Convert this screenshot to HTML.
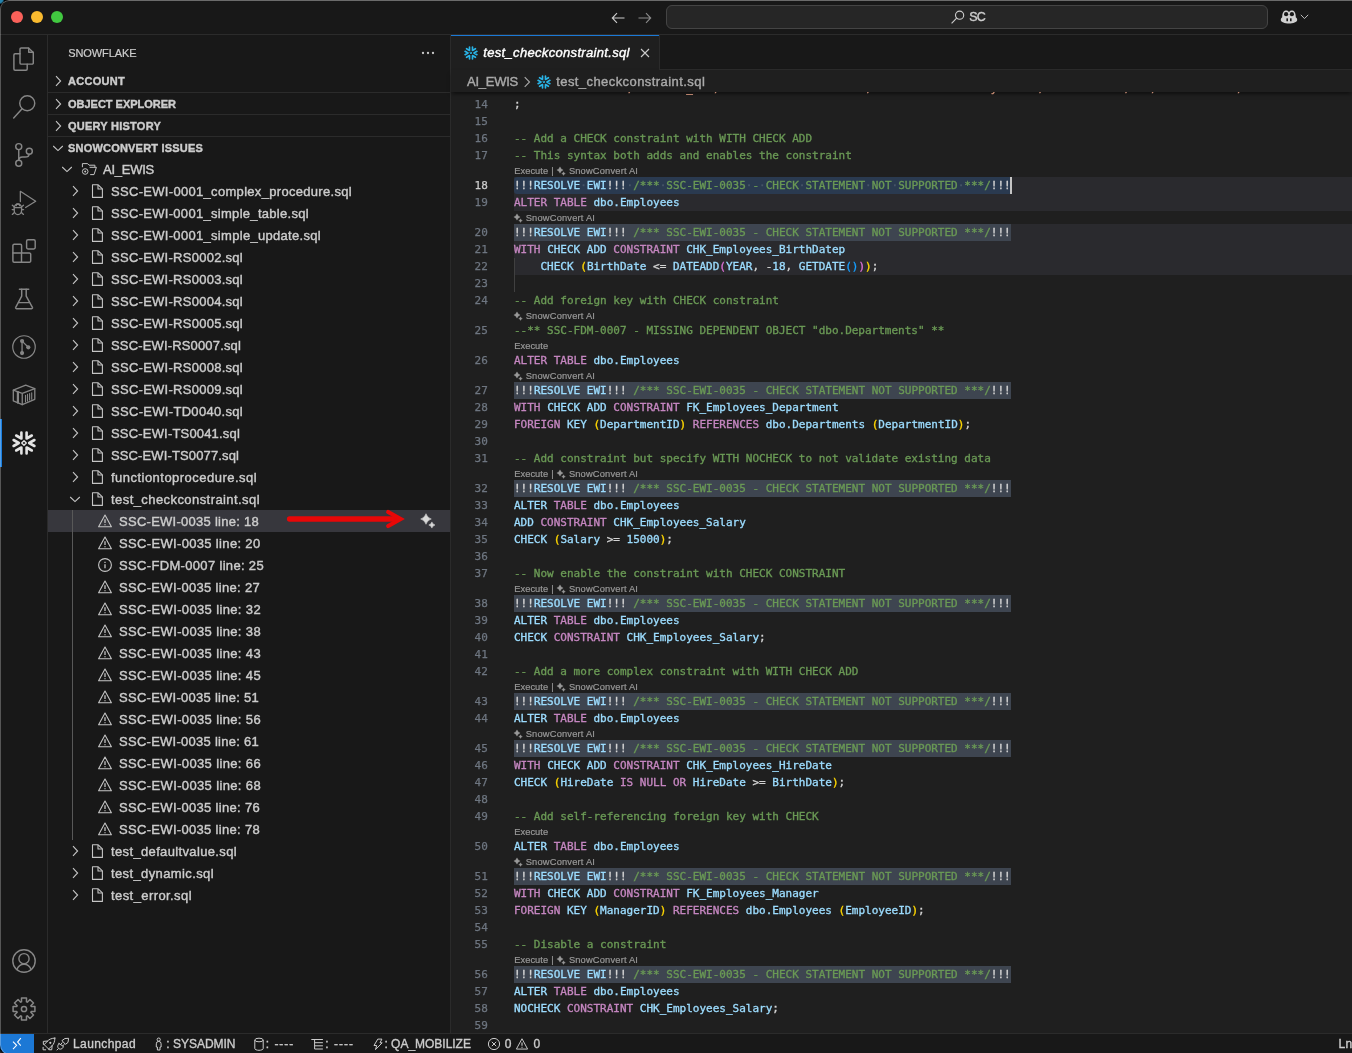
<!DOCTYPE html>
<html lang="en"><head><meta charset="utf-8"><title>test_checkconstraint.sql</title>
<style>
*{box-sizing:border-box}
html,body{margin:0;padding:0;background:#000;}
body{background:radial-gradient(circle at 0 0,#2683ad 0,#2683ad 2.5px,#000 4.5px) no-repeat 0 0/12px 12px,linear-gradient(45deg,#3a3a3a 0,#000 3px) no-repeat 0 100%/8px 8px,#000;}
body{width:1352px;height:1053px;overflow:hidden;font-family:"Liberation Sans",sans-serif;font-size:13px;color:#ccc;}
#win{will-change:transform;position:absolute;left:0;top:0;width:1400px;height:1055px;background:#181818;overflow:hidden;border-radius:9px 0 0 10px;}
#wb{position:absolute;left:0;top:0;width:1400px;height:1055px;border-radius:9px 0 0 10px;border:1px solid rgba(255,255,255,.27);border-top-color:rgba(255,255,255,.36);z-index:30;pointer-events:none}
.abs,.t,.ic{position:absolute}
.t{white-space:pre;-webkit-text-stroke:0.4px currentColor;}
svg{position:absolute;overflow:visible}
.ln{-webkit-text-stroke:0.25px currentColor;position:absolute;left:451px;width:36.800px;text-align:right;height:17px;line-height:17px;font-family:"DejaVu Sans Mono","Liberation Mono",monospace;font-size:11px;color:#6e7681;}
.cl{-webkit-text-stroke:0.33px currentColor;position:absolute;left:514px;height:17px;line-height:17px;font-family:"DejaVu Sans Mono","Liberation Mono",monospace;font-size:11px;color:#d4d4d4;white-space:pre;}
.k{color:#c586c0}.v{color:#9cdcfe}.c{color:#6a9955}.p{color:#d4d4d4}.b1{color:#ffd700}.b2{color:#da70d6}.b3{color:#179fff}.n{color:#b5cea8}.s{color:#ce9178}
.lens{position:absolute;left:514px;height:13px;line-height:13px;font-size:10px;color:#999;white-space:pre}
.hl{position:absolute;left:514px;height:17px;width:497px;background:#3e4550;}
.band{position:absolute;left:514px;right:0;background:#2a2a2e}
</style></head><body><div id="win">

<div class="abs" style="left:0;top:0;width:1352px;height:35px;border-bottom:1px solid #2b2b2b;background:#181818"></div>
<div class="abs" style="left:11px;top:11px;width:12px;height:12px;border-radius:50%;background:#f9615a"></div>
<div class="abs" style="left:31px;top:11px;width:12px;height:12px;border-radius:50%;background:#f9ba2f"></div>
<div class="abs" style="left:51px;top:11px;width:12px;height:12px;border-radius:50%;background:#41c840"></div>
<svg style="left:610.3px;top:9.5px" width="16" height="16" viewBox="0 0 16 16"><path d="M14.5 8H2.5M7 3.2L2.3 8L7 12.8" fill="none" stroke="#ccc" stroke-width="1.1"/></svg>
<svg style="left:636.7px;top:9.5px" width="16" height="16" viewBox="0 0 16 16"><path d="M1.5 8H13.5M9 3.2L13.7 8L9 12.8" fill="none" stroke="#8a8a8a" stroke-width="1.1"/></svg>
<div class="abs" style="left:666px;top:5px;width:602px;height:24px;border-radius:6px;background:#262626;border:1px solid #444"></div>
<svg style="left:950px;top:9px" width="16" height="16" viewBox="0 0 16 16"><circle cx="9.6" cy="6.2" r="4.1" fill="none" stroke="#ccc" stroke-width="1.1"/><path d="M6.6 9.2L1.6 14.4" stroke="#ccc" stroke-width="1.1"/></svg>
<div class="t" style="left:969.3px;top:6px;height:22px;line-height:22px;font-size:12.5px;color:#ccc;letter-spacing:-0.882px;">SC</div>
<svg style="left:1280px;top:9px" width="18" height="16" viewBox="0 0 18 16">
<path d="M2.2 8.2C2.2 3.5 4 1.6 6.2 1.6C7.6 1.6 8.4 2.3 9 3C9.6 2.3 10.4 1.6 11.8 1.6C14 1.6 15.8 3.5 15.8 8.2C17 9 17.2 10 17.2 11C17.2 13.2 13 14.6 9 14.6C5 14.6 0.8 13.2 0.8 11C0.8 10 1 9 2.2 8.2Z" fill="#d0d0d0"/>
<circle cx="6.1" cy="5.2" r="2.1" fill="#181818"/><circle cx="11.9" cy="5.2" r="2.1" fill="#181818"/>
<rect x="6.4" y="9.3" width="1.6" height="3" rx=".5" fill="#181818"/><rect x="10" y="9.3" width="1.6" height="3" rx=".5" fill="#181818"/>
</svg>
<svg style="left:1300px;top:13px" width="9" height="8" viewBox="0 0 9 8"><path d="M0.8 1.8L4.5 5.6L8.2 1.8" fill="none" stroke="#bbb" stroke-width="1"/></svg>
<div class="abs" style="left:0;top:35px;width:48px;height:998px;border-right:1px solid #2b2b2b"></div>
<svg style="left:12.0px;top:47.0px" width="24" height="24" viewBox="0 0 24 24" fill="none" stroke="#868686" stroke-width="1.45" stroke-linejoin="round" stroke-linecap="round"><path d="M9.2 0.9h7.3l4.8 4.6v10.400a1.200 1.200 0 0 1-1.200 1.200h-10.900a1.200 1.200 0 0 1-1.200-1.200v-13.800a1.200 1.200 0 0 1 1.200-1.200z"/><path d="M16.700 1.100v4.200h4.400"/><path d="M8 6.800h-4.900a1.200 1.200 0 0 0-1.200 1.200v14a1.200 1.200 0 0 0 1.200 1.200h10.900a1.200 1.200 0 0 0 1.200-1.200v-4.700"/></svg>
<svg style="left:12.0px;top:95.0px" width="24" height="24" viewBox="0 0 24 24" fill="none" stroke="#868686" stroke-width="1.45" stroke-linejoin="round" stroke-linecap="round"><circle cx="15.250" cy="8.200" r="7.500"/><path d="M10.100 13.800L1.700 23"/></svg>
<svg style="left:12.0px;top:143.0px" width="24" height="24" viewBox="0 0 24 24" fill="none" stroke="#868686" stroke-width="1.45" stroke-linejoin="round" stroke-linecap="round"><circle cx="6.750" cy="3.600" r="3"/><circle cx="6.750" cy="20.300" r="3"/><circle cx="17.300" cy="8.200" r="3"/><path d="M6.750 6.600v10.700"/><path d="M17.100 11.200C17.100 14 15.200 14 13 14L10.500 14C8 14 6.750 15 6.750 17.300"/></svg>
<svg style="left:12.0px;top:191.0px" width="24" height="24" viewBox="0 0 24 24" fill="none" stroke="#868686" stroke-width="1.3" stroke-linejoin="round" stroke-linecap="round"><path d="M8.350 10.600V0.300L23.700 10.250L13.600 16.500"/><path d="M2.200 17.300a3.700 4.300 0 0 1 7.400 0v2a3.700 4.300 0 0 1 -7.400 0z"/><path d="M2.200 16.700h7.400"/><path d="M4.200 14.700a1.700 1.700 0 0 1 3.400 0"/><path d="M0.300 14.200l1.900 1.600M0.200 18.600h2M0.300 23.400l2.100-1.800M11.500 14.200l-1.900 1.600M11.600 18.600h-2M11.500 23.400l-2.100-1.800"/></svg>
<svg style="left:12.0px;top:239.0px" width="24" height="24" viewBox="0 0 24 24" fill="none" stroke="#868686" stroke-width="1.45" stroke-linejoin="round" stroke-linecap="round"><path d="M2.100 5.300h6.300a1.200 1.200 0 0 1 1.200 1.200v7.550h7.900a1.200 1.200 0 0 1 1.200 1.200v6.750a1.200 1.200 0 0 1 -1.200 1.200h-15.400a1.200 1.200 0 0 1 -1.200-1.200v-15.500a1.200 1.200 0 0 1 1.200-1.200z"/><path d="M0.900 14.050h8.700M9.500 14.050v9.150"/><rect x="14.600" y="0.750" width="8.600" height="9.150" rx="1.400"/></svg>
<svg style="left:12.0px;top:287.0px" width="24" height="24" viewBox="0 0 24 24" fill="none" stroke="#868686" stroke-width="1.45" stroke-linejoin="round" stroke-linecap="round"><path d="M7.400 2.300h9.300"/><path d="M9.700 2.300v6.800l-6 11.200a.9 .9 0 0 0 .8 1.400h15.100a.9 .9 0 0 0 .8-1.400l-6.200-11.200v-6.800"/><path d="M6.600 15.600h10.900"/></svg>
<svg style="left:12.0px;top:335.0px" width="24" height="24" viewBox="0 0 24 24" fill="none" stroke="#868686" stroke-width="1.45" stroke-linejoin="round" stroke-linecap="round"><circle cx="12" cy="12" r="11.250" stroke-width="1.200"/><circle cx="10.050" cy="6.100" r="2.100" fill="#868686" stroke="none"/><circle cx="10.050" cy="18.050" r="2.100" fill="#868686" stroke="none"/><circle cx="16.300" cy="12.300" r="2.100" fill="#868686" stroke="none"/><path d="M10.050 6.100v12M10.050 6.100l6.250 6.200" stroke-width="1.300"/></svg>
<svg style="left:12.0px;top:383.0px" width="24" height="24" viewBox="0 0 24 24" fill="none" stroke="#868686" stroke-width="1.3" stroke-linejoin="round" stroke-linecap="round"><path d="M1.300 7.200L13.700 2.100L22.800 5.700V16.300L10.250 21.700L1.300 17.900Z"/><path d="M1.300 7.200L10.250 10.300L22.800 5.700M10.250 10.300V21.700"/><path d="M5.900 9.200V19.600" stroke-width="2.200"/><path d="M13.500 12.200V18.700M15.500 11.400V17.900M17.600 10.500V17M19.700 9.700V16.200" stroke-width="1.100"/></svg>
<div class="abs" style="left:0;top:419px;width:2px;height:48px;background:#1a7fe0"></div>
<svg style="left:24px;top:443px;" width="1" height="1" viewBox="0 0 1 1"><g transform="scale(1.0)" fill="none" stroke="#e4e4e4" stroke-width="2.6" stroke-linecap="round" stroke-linejoin="round"><path d="M10.40 -3.00L5.20 -0.00L10.40 3.00"/><path d="M2.60 -10.50L2.60 -4.50L7.80 -7.50"/><path d="M-7.80 -7.50L-2.60 -4.50L-2.60 -10.50"/><path d="M-10.40 3.00L-5.20 -0.00L-10.40 -3.00"/><path d="M-2.60 10.50L-2.60 4.50L-7.80 7.50"/><path d="M7.80 7.50L2.60 4.50L2.60 10.50"/><path d="M0 -2.3L2.3 0L0 2.3L-2.3 0Z" stroke-width="1.3"/></g></svg>
<svg style="left:12.0px;top:949.0px" width="24" height="24" viewBox="0 0 24 24" fill="none" stroke="#868686" stroke-width="1.4" stroke-linejoin="round" stroke-linecap="round"><circle cx="12" cy="12" r="11.200"/><circle cx="12" cy="9.700" r="5.100"/><path d="M4.900 20.500c1.300-3.500 4-5.300 7.100-5.300s5.800 1.800 7.100 5.300"/></svg>
<svg style="left:12.0px;top:997.0px" width="24" height="24" viewBox="0 0 24 24" fill="none" stroke="#868686" stroke-width="1.5" stroke-linejoin="round" stroke-linecap="round"><path d="M22.91 9.48L22.91 14.52L19.19 14.47L18.83 15.33L21.50 17.94L17.94 21.50L15.33 18.83L14.47 19.19L14.52 22.91L9.48 22.91L9.53 19.19L8.67 18.83L6.06 21.50L2.50 17.94L5.17 15.33L4.81 14.47L1.09 14.52L1.09 9.48L4.81 9.53L5.17 8.67L2.50 6.06L6.06 2.50L8.67 5.17L9.53 4.81L9.48 1.09L14.52 1.09L14.47 4.81L15.33 5.17L17.94 2.50L21.50 6.06L18.83 8.67L19.19 9.53Z"/><circle cx="12" cy="12" r="2.600"/></svg>
<div class="abs" style="left:48px;top:35px;width:403px;height:998px;border-right:1px solid #2b2b2b"></div>
<div class="t" style="left:68.2px;top:42px;height:22px;line-height:22px;font-size:11px;color:#ccc;letter-spacing:-0.096px;-webkit-text-stroke:0.2px currentColor;">SNOWFLAKE</div>
<svg style="left:415px;top:45px" width="26" height="16" viewBox="0 0 26 16" fill="#c8c8c8"><circle cx="8" cy="8" r="1.15"/><circle cx="13" cy="8" r="1.15"/><circle cx="18" cy="8" r="1.15"/></svg>
<svg style="left:50.3px;top:73.3px" width="16" height="16" viewBox="0 0 16 16"><path d="M6 3.200L10.600 8L6 12.800" fill="none" stroke="#c5c5c5" stroke-width="1.100"/></svg>
<div class="t" style="left:68px;top:70px;height:22px;line-height:22px;font-size:11px;color:#ccc;font-weight:bold;letter-spacing:0.286px;">ACCOUNT</div>
<div class="abs" style="left:48px;top:92px;width:402px;height:1px;background:#2b2b2b"></div>
<svg style="left:50.3px;top:96.0px" width="16" height="16" viewBox="0 0 16 16"><path d="M6 3.200L10.600 8L6 12.800" fill="none" stroke="#c5c5c5" stroke-width="1.100"/></svg>
<div class="t" style="left:68px;top:93px;height:22px;line-height:22px;font-size:11px;color:#ccc;font-weight:bold;letter-spacing:-0.012px;">OBJECT EXPLORER</div>
<div class="abs" style="left:48px;top:114px;width:402px;height:1px;background:#2b2b2b"></div>
<svg style="left:50.3px;top:118.0px" width="16" height="16" viewBox="0 0 16 16"><path d="M6 3.200L10.600 8L6 12.800" fill="none" stroke="#c5c5c5" stroke-width="1.100"/></svg>
<div class="t" style="left:68px;top:115px;height:22px;line-height:22px;font-size:11px;color:#ccc;font-weight:bold;letter-spacing:0.242px;">QUERY HISTORY</div>
<div class="abs" style="left:48px;top:136px;width:402px;height:1px;background:#2b2b2b"></div>
<svg style="left:50.3px;top:140.0px" width="16" height="16" viewBox="0 0 16 16"><path d="M3.200 6L8 10.600L12.800 6" fill="none" stroke="#c5c5c5" stroke-width="1.100"/></svg>
<div class="t" style="left:68px;top:137px;height:22px;line-height:22px;font-size:11px;color:#ccc;font-weight:bold;letter-spacing:0.200px;">SNOWCONVERT ISSUES</div>
<svg style="left:59px;top:161px" width="16" height="16" viewBox="0 0 16 16"><path d="M3.200 6L8 10.600L12.800 6" fill="none" stroke="#c5c5c5" stroke-width="1.100"/></svg>
<svg style="left:80px;top:161px" width="18" height="16" viewBox="0 0 18 16" fill="none" stroke="#c5c5c5" stroke-width="1" stroke-linejoin="round"><path d="M2.400 6.200V2.600H7.600L9 4.200H14.900V6.200"/><path d="M9.600 6.300H16.400L14 13.600H10.200"/><circle cx="5.200" cy="10.500" r="2.800"/><path d="M5.200 9.300L6.400 10.500L5.200 11.700L4 10.500Z" fill="#c5c5c5" stroke="none"/></svg>
<div class="t" style="left:103px;top:159px;height:22px;line-height:22px;font-size:13px;color:#ccc;letter-spacing:-0.248px;">AI_EWIS</div>
<svg style="left:67.4px;top:183px" width="16" height="16" viewBox="0 0 16 16"><path d="M6 3.200L10.600 8L6 12.800" fill="none" stroke="#c5c5c5" stroke-width="1.100"/></svg>
<svg style="left:89px;top:183px" width="16" height="16" viewBox="0 0 16 16" fill="none" stroke="#c5c5c5" stroke-width="1.100" stroke-linejoin="round"><path d="M3.500 1.800h5.700l4.200 4.100v8.500h-9.900z"/><path d="M9 2v4h4.200"/></svg>
<div class="t" style="left:111px;top:181px;height:22px;line-height:22px;font-size:13px;color:#ccc;letter-spacing:0.309px;">SSC-EWI-0001_complex_procedure.sql</div>
<svg style="left:67.4px;top:205px" width="16" height="16" viewBox="0 0 16 16"><path d="M6 3.200L10.600 8L6 12.800" fill="none" stroke="#c5c5c5" stroke-width="1.100"/></svg>
<svg style="left:89px;top:205px" width="16" height="16" viewBox="0 0 16 16" fill="none" stroke="#c5c5c5" stroke-width="1.100" stroke-linejoin="round"><path d="M3.500 1.800h5.700l4.200 4.100v8.500h-9.900z"/><path d="M9 2v4h4.200"/></svg>
<div class="t" style="left:111px;top:203px;height:22px;line-height:22px;font-size:13px;color:#ccc;letter-spacing:0.300px;">SSC-EWI-0001_simple_table.sql</div>
<svg style="left:67.4px;top:227px" width="16" height="16" viewBox="0 0 16 16"><path d="M6 3.200L10.600 8L6 12.800" fill="none" stroke="#c5c5c5" stroke-width="1.100"/></svg>
<svg style="left:89px;top:227px" width="16" height="16" viewBox="0 0 16 16" fill="none" stroke="#c5c5c5" stroke-width="1.100" stroke-linejoin="round"><path d="M3.500 1.800h5.700l4.200 4.100v8.500h-9.900z"/><path d="M9 2v4h4.200"/></svg>
<div class="t" style="left:111px;top:225px;height:22px;line-height:22px;font-size:13px;color:#ccc;letter-spacing:0.304px;">SSC-EWI-0001_simple_update.sql</div>
<svg style="left:67.4px;top:249px" width="16" height="16" viewBox="0 0 16 16"><path d="M6 3.200L10.600 8L6 12.800" fill="none" stroke="#c5c5c5" stroke-width="1.100"/></svg>
<svg style="left:89px;top:249px" width="16" height="16" viewBox="0 0 16 16" fill="none" stroke="#c5c5c5" stroke-width="1.100" stroke-linejoin="round"><path d="M3.500 1.800h5.700l4.200 4.100v8.500h-9.900z"/><path d="M9 2v4h4.200"/></svg>
<div class="t" style="left:111px;top:247px;height:22px;line-height:22px;font-size:13px;color:#ccc;letter-spacing:0.269px;">SSC-EWI-RS0002.sql</div>
<svg style="left:67.4px;top:271px" width="16" height="16" viewBox="0 0 16 16"><path d="M6 3.200L10.600 8L6 12.800" fill="none" stroke="#c5c5c5" stroke-width="1.100"/></svg>
<svg style="left:89px;top:271px" width="16" height="16" viewBox="0 0 16 16" fill="none" stroke="#c5c5c5" stroke-width="1.100" stroke-linejoin="round"><path d="M3.500 1.800h5.700l4.200 4.100v8.500h-9.900z"/><path d="M9 2v4h4.200"/></svg>
<div class="t" style="left:111px;top:269px;height:22px;line-height:22px;font-size:13px;color:#ccc;letter-spacing:0.269px;">SSC-EWI-RS0003.sql</div>
<svg style="left:67.4px;top:293px" width="16" height="16" viewBox="0 0 16 16"><path d="M6 3.200L10.600 8L6 12.800" fill="none" stroke="#c5c5c5" stroke-width="1.100"/></svg>
<svg style="left:89px;top:293px" width="16" height="16" viewBox="0 0 16 16" fill="none" stroke="#c5c5c5" stroke-width="1.100" stroke-linejoin="round"><path d="M3.500 1.800h5.700l4.200 4.100v8.500h-9.900z"/><path d="M9 2v4h4.200"/></svg>
<div class="t" style="left:111px;top:291px;height:22px;line-height:22px;font-size:13px;color:#ccc;letter-spacing:0.269px;">SSC-EWI-RS0004.sql</div>
<svg style="left:67.4px;top:315px" width="16" height="16" viewBox="0 0 16 16"><path d="M6 3.200L10.600 8L6 12.800" fill="none" stroke="#c5c5c5" stroke-width="1.100"/></svg>
<svg style="left:89px;top:315px" width="16" height="16" viewBox="0 0 16 16" fill="none" stroke="#c5c5c5" stroke-width="1.100" stroke-linejoin="round"><path d="M3.500 1.800h5.700l4.200 4.100v8.500h-9.900z"/><path d="M9 2v4h4.200"/></svg>
<div class="t" style="left:111px;top:313px;height:22px;line-height:22px;font-size:13px;color:#ccc;letter-spacing:0.269px;">SSC-EWI-RS0005.sql</div>
<svg style="left:67.4px;top:337px" width="16" height="16" viewBox="0 0 16 16"><path d="M6 3.200L10.600 8L6 12.800" fill="none" stroke="#c5c5c5" stroke-width="1.100"/></svg>
<svg style="left:89px;top:337px" width="16" height="16" viewBox="0 0 16 16" fill="none" stroke="#c5c5c5" stroke-width="1.100" stroke-linejoin="round"><path d="M3.500 1.800h5.700l4.200 4.100v8.500h-9.900z"/><path d="M9 2v4h4.200"/></svg>
<div class="t" style="left:111px;top:335px;height:22px;line-height:22px;font-size:13px;color:#ccc;letter-spacing:0.158px;">SSC-EWI-RS0007.sql</div>
<svg style="left:67.4px;top:359px" width="16" height="16" viewBox="0 0 16 16"><path d="M6 3.200L10.600 8L6 12.800" fill="none" stroke="#c5c5c5" stroke-width="1.100"/></svg>
<svg style="left:89px;top:359px" width="16" height="16" viewBox="0 0 16 16" fill="none" stroke="#c5c5c5" stroke-width="1.100" stroke-linejoin="round"><path d="M3.500 1.800h5.700l4.200 4.100v8.500h-9.900z"/><path d="M9 2v4h4.200"/></svg>
<div class="t" style="left:111px;top:357px;height:22px;line-height:22px;font-size:13px;color:#ccc;letter-spacing:0.269px;">SSC-EWI-RS0008.sql</div>
<svg style="left:67.4px;top:381px" width="16" height="16" viewBox="0 0 16 16"><path d="M6 3.200L10.600 8L6 12.800" fill="none" stroke="#c5c5c5" stroke-width="1.100"/></svg>
<svg style="left:89px;top:381px" width="16" height="16" viewBox="0 0 16 16" fill="none" stroke="#c5c5c5" stroke-width="1.100" stroke-linejoin="round"><path d="M3.500 1.800h5.700l4.200 4.100v8.500h-9.900z"/><path d="M9 2v4h4.200"/></svg>
<div class="t" style="left:111px;top:379px;height:22px;line-height:22px;font-size:13px;color:#ccc;letter-spacing:0.269px;">SSC-EWI-RS0009.sql</div>
<svg style="left:67.4px;top:403px" width="16" height="16" viewBox="0 0 16 16"><path d="M6 3.200L10.600 8L6 12.800" fill="none" stroke="#c5c5c5" stroke-width="1.100"/></svg>
<svg style="left:89px;top:403px" width="16" height="16" viewBox="0 0 16 16" fill="none" stroke="#c5c5c5" stroke-width="1.100" stroke-linejoin="round"><path d="M3.500 1.800h5.700l4.200 4.100v8.500h-9.900z"/><path d="M9 2v4h4.200"/></svg>
<div class="t" style="left:111px;top:401px;height:22px;line-height:22px;font-size:13px;color:#ccc;letter-spacing:0.310px;">SSC-EWI-TD0040.sql</div>
<svg style="left:67.4px;top:425px" width="16" height="16" viewBox="0 0 16 16"><path d="M6 3.200L10.600 8L6 12.800" fill="none" stroke="#c5c5c5" stroke-width="1.100"/></svg>
<svg style="left:89px;top:425px" width="16" height="16" viewBox="0 0 16 16" fill="none" stroke="#c5c5c5" stroke-width="1.100" stroke-linejoin="round"><path d="M3.500 1.800h5.700l4.200 4.100v8.500h-9.900z"/><path d="M9 2v4h4.200"/></svg>
<div class="t" style="left:111px;top:423px;height:22px;line-height:22px;font-size:13px;color:#ccc;letter-spacing:0.183px;">SSC-EWI-TS0041.sql</div>
<svg style="left:67.4px;top:447px" width="16" height="16" viewBox="0 0 16 16"><path d="M6 3.200L10.600 8L6 12.800" fill="none" stroke="#c5c5c5" stroke-width="1.100"/></svg>
<svg style="left:89px;top:447px" width="16" height="16" viewBox="0 0 16 16" fill="none" stroke="#c5c5c5" stroke-width="1.100" stroke-linejoin="round"><path d="M3.500 1.800h5.700l4.200 4.100v8.500h-9.900z"/><path d="M9 2v4h4.200"/></svg>
<div class="t" style="left:111px;top:445px;height:22px;line-height:22px;font-size:13px;color:#ccc;letter-spacing:0.128px;">SSC-EWI-TS0077.sql</div>
<svg style="left:67.4px;top:469px" width="16" height="16" viewBox="0 0 16 16"><path d="M6 3.200L10.600 8L6 12.800" fill="none" stroke="#c5c5c5" stroke-width="1.100"/></svg>
<svg style="left:89px;top:469px" width="16" height="16" viewBox="0 0 16 16" fill="none" stroke="#c5c5c5" stroke-width="1.100" stroke-linejoin="round"><path d="M3.500 1.800h5.700l4.200 4.100v8.500h-9.900z"/><path d="M9 2v4h4.200"/></svg>
<div class="t" style="left:111px;top:467px;height:22px;line-height:22px;font-size:13px;color:#ccc;letter-spacing:0.472px;">functiontoprocedure.sql</div>
<svg style="left:67.4px;top:491px" width="16" height="16" viewBox="0 0 16 16"><path d="M3.200 6L8 10.600L12.800 6" fill="none" stroke="#c5c5c5" stroke-width="1.100"/></svg>
<svg style="left:89px;top:491px" width="16" height="16" viewBox="0 0 16 16" fill="none" stroke="#c5c5c5" stroke-width="1.100" stroke-linejoin="round"><path d="M3.500 1.800h5.700l4.200 4.100v8.500h-9.900z"/><path d="M9 2v4h4.200"/></svg>
<div class="t" style="left:111px;top:489px;height:22px;line-height:22px;font-size:13px;color:#ccc;letter-spacing:0.428px;">test_checkconstraint.sql</div>
<div class="abs" style="left:48px;top:510px;width:402px;height:22px;background:#37373d"></div>
<div class="abs" style="left:72px;top:510px;width:1px;height:330px;background:#585858"></div>
<svg style="left:97.0px;top:512.8px" width="16" height="16" viewBox="0 0 16 16" fill="none" stroke="#c5c5c5" stroke-width="1.100" stroke-linejoin="round"><path d="M8 2L14.400 13.800H1.600z"/><path d="M8 6.200v3.800" stroke-width="1.300"/><path d="M8 11.200v1.100" stroke-width="1.300"/></svg>
<div class="t" style="left:119px;top:511px;height:22px;line-height:22px;font-size:13px;color:#ccc;letter-spacing:0.267px;">SSC-EWI-0035 line: 18</div>
<svg style="left:97.0px;top:534.8px" width="16" height="16" viewBox="0 0 16 16" fill="none" stroke="#c5c5c5" stroke-width="1.100" stroke-linejoin="round"><path d="M8 2L14.400 13.800H1.600z"/><path d="M8 6.200v3.800" stroke-width="1.300"/><path d="M8 11.200v1.100" stroke-width="1.300"/></svg>
<div class="t" style="left:119px;top:533px;height:22px;line-height:22px;font-size:13px;color:#ccc;letter-spacing:0.338px;">SSC-EWI-0035 line: 20</div>
<svg style="left:97px;top:557px" width="16" height="16" viewBox="0 0 16 16" fill="none" stroke="#c5c5c5" stroke-width="1.100"><circle cx="8" cy="8" r="6.400"/><path d="M8 7.200v4" stroke-width="1.300"/><path d="M8 4.800v1.100" stroke-width="1.300"/></svg>
<div class="t" style="left:119px;top:555px;height:22px;line-height:22px;font-size:13px;color:#ccc;letter-spacing:0.333px;">SSC-FDM-0007 line: 25</div>
<svg style="left:97.0px;top:578.8px" width="16" height="16" viewBox="0 0 16 16" fill="none" stroke="#c5c5c5" stroke-width="1.100" stroke-linejoin="round"><path d="M8 2L14.400 13.800H1.600z"/><path d="M8 6.200v3.800" stroke-width="1.300"/><path d="M8 11.200v1.100" stroke-width="1.300"/></svg>
<div class="t" style="left:119px;top:577px;height:22px;line-height:22px;font-size:13px;color:#ccc;letter-spacing:0.315px;">SSC-EWI-0035 line: 27</div>
<svg style="left:97.0px;top:600.8px" width="16" height="16" viewBox="0 0 16 16" fill="none" stroke="#c5c5c5" stroke-width="1.100" stroke-linejoin="round"><path d="M8 2L14.400 13.800H1.600z"/><path d="M8 6.200v3.800" stroke-width="1.300"/><path d="M8 11.200v1.100" stroke-width="1.300"/></svg>
<div class="t" style="left:119px;top:599px;height:22px;line-height:22px;font-size:13px;color:#ccc;letter-spacing:0.362px;">SSC-EWI-0035 line: 32</div>
<svg style="left:97.0px;top:622.8px" width="16" height="16" viewBox="0 0 16 16" fill="none" stroke="#c5c5c5" stroke-width="1.100" stroke-linejoin="round"><path d="M8 2L14.400 13.800H1.600z"/><path d="M8 6.200v3.800" stroke-width="1.300"/><path d="M8 11.200v1.100" stroke-width="1.300"/></svg>
<div class="t" style="left:119px;top:621px;height:22px;line-height:22px;font-size:13px;color:#ccc;letter-spacing:0.362px;">SSC-EWI-0035 line: 38</div>
<svg style="left:97.0px;top:644.8px" width="16" height="16" viewBox="0 0 16 16" fill="none" stroke="#c5c5c5" stroke-width="1.100" stroke-linejoin="round"><path d="M8 2L14.400 13.800H1.600z"/><path d="M8 6.200v3.800" stroke-width="1.300"/><path d="M8 11.200v1.100" stroke-width="1.300"/></svg>
<div class="t" style="left:119px;top:643px;height:22px;line-height:22px;font-size:13px;color:#ccc;letter-spacing:0.362px;">SSC-EWI-0035 line: 43</div>
<svg style="left:97.0px;top:666.8px" width="16" height="16" viewBox="0 0 16 16" fill="none" stroke="#c5c5c5" stroke-width="1.100" stroke-linejoin="round"><path d="M8 2L14.400 13.800H1.600z"/><path d="M8 6.200v3.800" stroke-width="1.300"/><path d="M8 11.200v1.100" stroke-width="1.300"/></svg>
<div class="t" style="left:119px;top:665px;height:22px;line-height:22px;font-size:13px;color:#ccc;letter-spacing:0.362px;">SSC-EWI-0035 line: 45</div>
<svg style="left:97.0px;top:688.8px" width="16" height="16" viewBox="0 0 16 16" fill="none" stroke="#c5c5c5" stroke-width="1.100" stroke-linejoin="round"><path d="M8 2L14.400 13.800H1.600z"/><path d="M8 6.200v3.800" stroke-width="1.300"/><path d="M8 11.200v1.100" stroke-width="1.300"/></svg>
<div class="t" style="left:119px;top:687px;height:22px;line-height:22px;font-size:13px;color:#ccc;letter-spacing:0.267px;">SSC-EWI-0035 line: 51</div>
<svg style="left:97.0px;top:710.8px" width="16" height="16" viewBox="0 0 16 16" fill="none" stroke="#c5c5c5" stroke-width="1.100" stroke-linejoin="round"><path d="M8 2L14.400 13.800H1.600z"/><path d="M8 6.200v3.800" stroke-width="1.300"/><path d="M8 11.200v1.100" stroke-width="1.300"/></svg>
<div class="t" style="left:119px;top:709px;height:22px;line-height:22px;font-size:13px;color:#ccc;letter-spacing:0.362px;">SSC-EWI-0035 line: 56</div>
<svg style="left:97.0px;top:732.8px" width="16" height="16" viewBox="0 0 16 16" fill="none" stroke="#c5c5c5" stroke-width="1.100" stroke-linejoin="round"><path d="M8 2L14.400 13.800H1.600z"/><path d="M8 6.200v3.800" stroke-width="1.300"/><path d="M8 11.200v1.100" stroke-width="1.300"/></svg>
<div class="t" style="left:119px;top:731px;height:22px;line-height:22px;font-size:13px;color:#ccc;letter-spacing:0.267px;">SSC-EWI-0035 line: 61</div>
<svg style="left:97.0px;top:754.8px" width="16" height="16" viewBox="0 0 16 16" fill="none" stroke="#c5c5c5" stroke-width="1.100" stroke-linejoin="round"><path d="M8 2L14.400 13.800H1.600z"/><path d="M8 6.200v3.800" stroke-width="1.300"/><path d="M8 11.200v1.100" stroke-width="1.300"/></svg>
<div class="t" style="left:119px;top:753px;height:22px;line-height:22px;font-size:13px;color:#ccc;letter-spacing:0.362px;">SSC-EWI-0035 line: 66</div>
<svg style="left:97.0px;top:776.8px" width="16" height="16" viewBox="0 0 16 16" fill="none" stroke="#c5c5c5" stroke-width="1.100" stroke-linejoin="round"><path d="M8 2L14.400 13.800H1.600z"/><path d="M8 6.200v3.800" stroke-width="1.300"/><path d="M8 11.200v1.100" stroke-width="1.300"/></svg>
<div class="t" style="left:119px;top:775px;height:22px;line-height:22px;font-size:13px;color:#ccc;letter-spacing:0.362px;">SSC-EWI-0035 line: 68</div>
<svg style="left:97.0px;top:798.8px" width="16" height="16" viewBox="0 0 16 16" fill="none" stroke="#c5c5c5" stroke-width="1.100" stroke-linejoin="round"><path d="M8 2L14.400 13.800H1.600z"/><path d="M8 6.200v3.800" stroke-width="1.300"/><path d="M8 11.200v1.100" stroke-width="1.300"/></svg>
<div class="t" style="left:119px;top:797px;height:22px;line-height:22px;font-size:13px;color:#ccc;letter-spacing:0.315px;">SSC-EWI-0035 line: 76</div>
<svg style="left:97.0px;top:820.8px" width="16" height="16" viewBox="0 0 16 16" fill="none" stroke="#c5c5c5" stroke-width="1.100" stroke-linejoin="round"><path d="M8 2L14.400 13.800H1.600z"/><path d="M8 6.200v3.800" stroke-width="1.300"/><path d="M8 11.200v1.100" stroke-width="1.300"/></svg>
<div class="t" style="left:119px;top:819px;height:22px;line-height:22px;font-size:13px;color:#ccc;letter-spacing:0.315px;">SSC-EWI-0035 line: 78</div>
<svg style="left:286px;top:510px" width="122" height="22" viewBox="0 0 122 22"><path d="M3.600 9H112" stroke="#e80707" stroke-width="5.400" stroke-linecap="round"/><path d="M102.200 2L114.600 9L102.200 16" fill="none" stroke="#e80707" stroke-width="4.200" stroke-linecap="round" stroke-linejoin="miter"/></svg>
<svg style="left:426px;top:519px" width="1" height="1" viewBox="0 0 1 1"><path d="M0.00 -5.30Q1.25 -1.25 5.30 0.00Q1.25 1.25 0.00 5.30Q-1.25 1.25 -5.30 0.00Q-1.25 -1.25 0.00 -5.30ZM5.90 2.90Q6.60 5.30 9.00 6.00Q6.60 6.70 5.90 9.10Q5.20 6.70 2.80 6.00Q5.20 5.30 5.90 2.90Z" fill="#d8d8d8" stroke="#d8d8d8" stroke-width="0.50" stroke-linejoin="round"/></svg>
<svg style="left:67.4px;top:843px" width="16" height="16" viewBox="0 0 16 16"><path d="M6 3.200L10.600 8L6 12.800" fill="none" stroke="#c5c5c5" stroke-width="1.100"/></svg>
<svg style="left:89px;top:843px" width="16" height="16" viewBox="0 0 16 16" fill="none" stroke="#c5c5c5" stroke-width="1.100" stroke-linejoin="round"><path d="M3.500 1.800h5.700l4.200 4.100v8.500h-9.900z"/><path d="M9 2v4h4.200"/></svg>
<div class="t" style="left:111px;top:841px;height:22px;line-height:22px;font-size:13px;color:#ccc;letter-spacing:0.356px;">test_defaultvalue.sql</div>
<svg style="left:67.4px;top:865px" width="16" height="16" viewBox="0 0 16 16"><path d="M6 3.200L10.600 8L6 12.800" fill="none" stroke="#c5c5c5" stroke-width="1.100"/></svg>
<svg style="left:89px;top:865px" width="16" height="16" viewBox="0 0 16 16" fill="none" stroke="#c5c5c5" stroke-width="1.100" stroke-linejoin="round"><path d="M3.500 1.800h5.700l4.200 4.100v8.500h-9.900z"/><path d="M9 2v4h4.200"/></svg>
<div class="t" style="left:111px;top:863px;height:22px;line-height:22px;font-size:13px;color:#ccc;letter-spacing:0.386px;">test_dynamic.sql</div>
<svg style="left:67.4px;top:887px" width="16" height="16" viewBox="0 0 16 16"><path d="M6 3.200L10.600 8L6 12.800" fill="none" stroke="#c5c5c5" stroke-width="1.100"/></svg>
<svg style="left:89px;top:887px" width="16" height="16" viewBox="0 0 16 16" fill="none" stroke="#c5c5c5" stroke-width="1.100" stroke-linejoin="round"><path d="M3.500 1.800h5.700l4.200 4.100v8.500h-9.900z"/><path d="M9 2v4h4.200"/></svg>
<div class="t" style="left:111px;top:885px;height:22px;line-height:22px;font-size:13px;color:#ccc;letter-spacing:0.418px;">test_error.sql</div>
<div class="abs" style="left:451px;top:35px;width:901px;height:35px;background:#181818;border-bottom:1px solid #2b2b2b"></div>
<div class="abs" style="left:451px;top:35px;width:209px;height:35px;background:#1f1f1f;border-right:1px solid #2b2b2b"></div><div class="abs" style="left:451px;top:35px;width:208px;height:1px;background:#1b79d6"></div>
<svg style="left:470.7px;top:53px;" width="1" height="1" viewBox="0 0 1 1"><g transform="scale(0.57)" fill="none" stroke="#29b5e8" stroke-width="2.9" stroke-linecap="round" stroke-linejoin="round"><path d="M10.40 -3.00L5.20 -0.00L10.40 3.00"/><path d="M2.60 -10.50L2.60 -4.50L7.80 -7.50"/><path d="M-7.80 -7.50L-2.60 -4.50L-2.60 -10.50"/><path d="M-10.40 3.00L-5.20 -0.00L-10.40 -3.00"/><path d="M-2.60 10.50L-2.60 4.50L-7.80 7.50"/><path d="M7.80 7.50L2.60 4.50L2.60 10.50"/><path d="M0 -1.5L1.5 0L0 1.5L-1.5 0Z" stroke-width="1.6" fill="#29b5e8"/></g></svg>
<div class="t" style="left:483.3px;top:42px;height:22px;line-height:22px;font-size:13px;color:#fff;font-style:italic;letter-spacing:0.324px;">test_checkconstraint.sql</div>
<svg style="left:637px;top:45px" width="16" height="16" viewBox="0 0 16 16"><path d="M4 4L12 12M12 4L4 12" stroke="#ccc" stroke-width="1.100"/></svg>
<div class="abs" style="left:451px;top:70px;width:901px;height:963px;background:#1f1f1f"></div>
<div class="abs" style="left:451px;top:70px;width:901px;height:22px;background:#1f1f1f;z-index:5;box-shadow:0 3px 4px -1px rgba(0,0,0,.55)"></div>
<div class="t" style="left:467px;top:71px;height:22px;line-height:22px;font-size:13px;color:#a9a9a9;letter-spacing:-0.248px;z-index:6;">AI_EWIS</div>
<svg style="left:519px;top:73.5px;z-index:6" width="16" height="16" viewBox="0 0 16 16"><path d="M5.700 3.200L10.500 8L5.700 12.800" fill="none" stroke="#a9a9a9" stroke-width="1.100"/></svg>
<svg style="left:543.6px;top:81.5px;z-index:6;" width="1" height="1" viewBox="0 0 1 1"><g transform="scale(0.57)" fill="none" stroke="#29b5e8" stroke-width="2.9" stroke-linecap="round" stroke-linejoin="round"><path d="M10.40 -3.00L5.20 -0.00L10.40 3.00"/><path d="M2.60 -10.50L2.60 -4.50L7.80 -7.50"/><path d="M-7.80 -7.50L-2.60 -4.50L-2.60 -10.50"/><path d="M-10.40 3.00L-5.20 -0.00L-10.40 -3.00"/><path d="M-2.60 10.50L-2.60 4.50L-7.80 7.50"/><path d="M7.80 7.50L2.60 4.50L2.60 10.50"/><path d="M0 -1.5L1.5 0L0 1.5L-1.5 0Z" stroke-width="1.6" fill="#29b5e8"/></g></svg>
<div class="t" style="left:556.2px;top:71px;height:22px;line-height:22px;font-size:13px;color:#a9a9a9;letter-spacing:0.428px;z-index:6;">test_checkconstraint.sql</div>
<div class="abs" style="left:451px;top:92px;width:901px;height:941px;overflow:hidden"><div class="abs" style="left:-451px;top:-92px;width:1352px;height:1053px">
<div class="band" style="top:177px;height:34px"></div>
<div class="band" style="top:224px;height:51px"></div>
<div class="abs" style="left:514px;top:258px;width:1px;height:34px;background:#404040"></div>
<div class="abs" style="left:0;top:0;width:1352px;height:100px;z-index:7"><div class="cl" style="top:79.6px"><span class="s">                 ,        _   ,                      ,                  y      ,            ,   ,            ,  </span></div></div>
<div class="ln" style="top:96px;">14</div>
<div class="cl" style="top:96px"><span class="p">;</span></div>
<div class="ln" style="top:113px;">15</div>
<div class="ln" style="top:130px;">16</div>
<div class="cl" style="top:130px"><span class="c">-- Add a CHECK constraint with WITH CHECK ADD</span></div>
<div class="ln" style="top:147px;">17</div>
<div class="cl" style="top:147px"><span class="c">-- This syntax both adds and enables the constraint</span></div>
<div class="t" style="left:514.2px;top:165px;height:13px;line-height:13px;font-size:9.3px;color:#999;letter-spacing:0.057px;-webkit-text-stroke:0.2px currentColor;">Execute</div>
<div class="t" style="left:551.2px;top:165px;height:13px;line-height:13px;font-size:9.3px;color:#999;-webkit-text-stroke:0.2px currentColor;">|</div>
<svg style="left:560px;top:170.1px" width="1" height="1" viewBox="0 0 1 1"><path d="M0.00 -3.18Q0.75 -0.75 3.18 0.00Q0.75 0.75 0.00 3.18Q-0.75 0.75 -3.18 0.00Q-0.75 -0.75 0.00 -3.18ZM3.54 1.74Q3.96 3.18 5.40 3.60Q3.96 4.02 3.54 5.46Q3.12 4.02 1.68 3.60Q3.12 3.18 3.54 1.74Z" fill="#999" stroke="#999" stroke-width="0.30" stroke-linejoin="round"/></svg>
<div class="t" style="left:568.9px;top:165px;height:13px;line-height:13px;font-size:9.3px;color:#999;letter-spacing:0.180px;-webkit-text-stroke:0.2px currentColor;">SnowConvert AI</div>
<div class="hl" style="top:177px;background:#2a3a50;border-radius:3px 0 0 3px"></div>
<div class="cl" style="top:177px;color:rgba(255,255,255,.10)">          ·      ·    ·            · ·     ·         ·   ·         ·       </div>
<div class="abs" style="left:1009.800px;top:177px;width:2.200px;height:17px;background:#c4c4c4"></div>
<div class="ln" style="top:177px;color:#ccc;">18</div>
<div class="cl" style="top:177px"><span class="p">!!!</span><span class="v">RESOLVE EWI</span><span class="p">!!! </span><span class="c">/*** SSC-EWI-0035 - CHECK STATEMENT NOT SUPPORTED ***/</span><span class="p">!!!</span></div>
<div class="ln" style="top:194px;">19</div>
<div class="cl" style="top:194px"><span class="k">ALTER TABLE </span><span class="v">dbo.Employees</span></div>
<svg style="left:517.1px;top:217.1px" width="1" height="1" viewBox="0 0 1 1"><path d="M0.00 -3.18Q0.75 -0.75 3.18 0.00Q0.75 0.75 0.00 3.18Q-0.75 0.75 -3.18 0.00Q-0.75 -0.75 0.00 -3.18ZM3.54 1.74Q3.96 3.18 5.40 3.60Q3.96 4.02 3.54 5.46Q3.12 4.02 1.68 3.60Q3.12 3.18 3.54 1.74Z" fill="#999" stroke="#999" stroke-width="0.30" stroke-linejoin="round"/></svg>
<div class="t" style="left:525.7px;top:212px;height:13px;line-height:13px;font-size:9.3px;color:#999;letter-spacing:0.194px;-webkit-text-stroke:0.2px currentColor;">SnowConvert AI</div>
<div class="hl" style="top:224px"></div>
<div class="ln" style="top:224px;">20</div>
<div class="cl" style="top:224px"><span class="p">!!!</span><span class="v">RESOLVE EWI</span><span class="p">!!! </span><span class="c">/*** SSC-EWI-0035 - CHECK STATEMENT NOT SUPPORTED ***/</span><span class="p">!!!</span></div>
<div class="ln" style="top:241px;">21</div>
<div class="cl" style="top:241px"><span class="k">WITH </span><span class="v">CHECK ADD </span><span class="k">CONSTRAINT </span><span class="v">CHK_Employees_BirthDatep</span></div>
<div class="ln" style="top:258px;">22</div>
<div class="cl" style="top:258px"><span class="p">    </span><span class="v">CHECK </span><span class="b1">(</span><span class="v">BirthDate </span><span class="p">&lt;= </span><span class="v">DATEADD</span><span class="b2">(</span><span class="v">YEAR</span><span class="p">, -</span><span class="v">18</span><span class="p">, </span><span class="v">GETDATE</span><span class="b3">()</span><span class="b2">)</span><span class="b1">)</span><span class="p">;</span></div>
<div class="ln" style="top:275px;">23</div>
<div class="ln" style="top:292px;">24</div>
<div class="cl" style="top:292px"><span class="c">-- Add foreign key with CHECK constraint</span></div>
<svg style="left:517.1px;top:315.1px" width="1" height="1" viewBox="0 0 1 1"><path d="M0.00 -3.18Q0.75 -0.75 3.18 0.00Q0.75 0.75 0.00 3.18Q-0.75 0.75 -3.18 0.00Q-0.75 -0.75 0.00 -3.18ZM3.54 1.74Q3.96 3.18 5.40 3.60Q3.96 4.02 3.54 5.46Q3.12 4.02 1.68 3.60Q3.12 3.18 3.54 1.74Z" fill="#999" stroke="#999" stroke-width="0.30" stroke-linejoin="round"/></svg>
<div class="t" style="left:525.7px;top:310px;height:13px;line-height:13px;font-size:9.3px;color:#999;letter-spacing:0.194px;-webkit-text-stroke:0.2px currentColor;">SnowConvert AI</div>
<div class="ln" style="top:322px;">25</div>
<div class="cl" style="top:322px"><span class="c">--** SSC-FDM-0007 - MISSING DEPENDENT OBJECT &quot;dbo.Departments&quot; **</span></div>
<div class="t" style="left:514.2px;top:340px;height:13px;line-height:13px;font-size:9.3px;color:#999;letter-spacing:0.057px;-webkit-text-stroke:0.2px currentColor;">Execute</div>
<div class="ln" style="top:352px;">26</div>
<div class="cl" style="top:352px"><span class="k">ALTER TABLE </span><span class="v">dbo.Employees</span></div>
<svg style="left:517.1px;top:375.1px" width="1" height="1" viewBox="0 0 1 1"><path d="M0.00 -3.18Q0.75 -0.75 3.18 0.00Q0.75 0.75 0.00 3.18Q-0.75 0.75 -3.18 0.00Q-0.75 -0.75 0.00 -3.18ZM3.54 1.74Q3.96 3.18 5.40 3.60Q3.96 4.02 3.54 5.46Q3.12 4.02 1.68 3.60Q3.12 3.18 3.54 1.74Z" fill="#999" stroke="#999" stroke-width="0.30" stroke-linejoin="round"/></svg>
<div class="t" style="left:525.7px;top:370px;height:13px;line-height:13px;font-size:9.3px;color:#999;letter-spacing:0.194px;-webkit-text-stroke:0.2px currentColor;">SnowConvert AI</div>
<div class="hl" style="top:382px"></div>
<div class="ln" style="top:382px;">27</div>
<div class="cl" style="top:382px"><span class="p">!!!</span><span class="v">RESOLVE EWI</span><span class="p">!!! </span><span class="c">/*** SSC-EWI-0035 - CHECK STATEMENT NOT SUPPORTED ***/</span><span class="p">!!!</span></div>
<div class="ln" style="top:399px;">28</div>
<div class="cl" style="top:399px"><span class="k">WITH </span><span class="v">CHECK ADD </span><span class="k">CONSTRAINT </span><span class="v">FK_Employees_Department</span></div>
<div class="ln" style="top:416px;">29</div>
<div class="cl" style="top:416px"><span class="k">FOREIGN </span><span class="v">KEY </span><span class="b1">(</span><span class="v">DepartmentID</span><span class="b1">)</span><span class="p"> </span><span class="k">REFERENCES </span><span class="v">dbo.Departments </span><span class="b1">(</span><span class="v">DepartmentID</span><span class="b1">)</span><span class="p">;</span></div>
<div class="ln" style="top:433px;">30</div>
<div class="ln" style="top:450px;">31</div>
<div class="cl" style="top:450px"><span class="c">-- Add constraint but specify WITH NOCHECK to not validate existing data</span></div>
<div class="t" style="left:514.2px;top:468px;height:13px;line-height:13px;font-size:9.3px;color:#999;letter-spacing:0.057px;-webkit-text-stroke:0.2px currentColor;">Execute</div>
<div class="t" style="left:551.2px;top:468px;height:13px;line-height:13px;font-size:9.3px;color:#999;-webkit-text-stroke:0.2px currentColor;">|</div>
<svg style="left:560px;top:473.1px" width="1" height="1" viewBox="0 0 1 1"><path d="M0.00 -3.18Q0.75 -0.75 3.18 0.00Q0.75 0.75 0.00 3.18Q-0.75 0.75 -3.18 0.00Q-0.75 -0.75 0.00 -3.18ZM3.54 1.74Q3.96 3.18 5.40 3.60Q3.96 4.02 3.54 5.46Q3.12 4.02 1.68 3.60Q3.12 3.18 3.54 1.74Z" fill="#999" stroke="#999" stroke-width="0.30" stroke-linejoin="round"/></svg>
<div class="t" style="left:568.9px;top:468px;height:13px;line-height:13px;font-size:9.3px;color:#999;letter-spacing:0.180px;-webkit-text-stroke:0.2px currentColor;">SnowConvert AI</div>
<div class="hl" style="top:480px"></div>
<div class="ln" style="top:480px;">32</div>
<div class="cl" style="top:480px"><span class="p">!!!</span><span class="v">RESOLVE EWI</span><span class="p">!!! </span><span class="c">/*** SSC-EWI-0035 - CHECK STATEMENT NOT SUPPORTED ***/</span><span class="p">!!!</span></div>
<div class="ln" style="top:497px;">33</div>
<div class="cl" style="top:497px"><span class="v">ALTER </span><span class="k">TABLE </span><span class="v">dbo.Employees</span></div>
<div class="ln" style="top:514px;">34</div>
<div class="cl" style="top:514px"><span class="v">ADD </span><span class="k">CONSTRAINT </span><span class="v">CHK_Employees_Salary</span></div>
<div class="ln" style="top:531px;">35</div>
<div class="cl" style="top:531px"><span class="v">CHECK </span><span class="b1">(</span><span class="v">Salary </span><span class="p">&gt;= </span><span class="v">15000</span><span class="b1">)</span><span class="p">;</span></div>
<div class="ln" style="top:548px;">36</div>
<div class="ln" style="top:565px;">37</div>
<div class="cl" style="top:565px"><span class="c">-- Now enable the constraint with CHECK CONSTRAINT</span></div>
<div class="t" style="left:514.2px;top:583px;height:13px;line-height:13px;font-size:9.3px;color:#999;letter-spacing:0.057px;-webkit-text-stroke:0.2px currentColor;">Execute</div>
<div class="t" style="left:551.2px;top:583px;height:13px;line-height:13px;font-size:9.3px;color:#999;-webkit-text-stroke:0.2px currentColor;">|</div>
<svg style="left:560px;top:588.1px" width="1" height="1" viewBox="0 0 1 1"><path d="M0.00 -3.18Q0.75 -0.75 3.18 0.00Q0.75 0.75 0.00 3.18Q-0.75 0.75 -3.18 0.00Q-0.75 -0.75 0.00 -3.18ZM3.54 1.74Q3.96 3.18 5.40 3.60Q3.96 4.02 3.54 5.46Q3.12 4.02 1.68 3.60Q3.12 3.18 3.54 1.74Z" fill="#999" stroke="#999" stroke-width="0.30" stroke-linejoin="round"/></svg>
<div class="t" style="left:568.9px;top:583px;height:13px;line-height:13px;font-size:9.3px;color:#999;letter-spacing:0.180px;-webkit-text-stroke:0.2px currentColor;">SnowConvert AI</div>
<div class="hl" style="top:595px"></div>
<div class="ln" style="top:595px;">38</div>
<div class="cl" style="top:595px"><span class="p">!!!</span><span class="v">RESOLVE EWI</span><span class="p">!!! </span><span class="c">/*** SSC-EWI-0035 - CHECK STATEMENT NOT SUPPORTED ***/</span><span class="p">!!!</span></div>
<div class="ln" style="top:612px;">39</div>
<div class="cl" style="top:612px"><span class="v">ALTER </span><span class="k">TABLE </span><span class="v">dbo.Employees</span></div>
<div class="ln" style="top:629px;">40</div>
<div class="cl" style="top:629px"><span class="v">CHECK </span><span class="k">CONSTRAINT </span><span class="v">CHK_Employees_Salary</span><span class="p">;</span></div>
<div class="ln" style="top:646px;">41</div>
<div class="ln" style="top:663px;">42</div>
<div class="cl" style="top:663px"><span class="c">-- Add a more complex constraint with WITH CHECK ADD</span></div>
<div class="t" style="left:514.2px;top:681px;height:13px;line-height:13px;font-size:9.3px;color:#999;letter-spacing:0.057px;-webkit-text-stroke:0.2px currentColor;">Execute</div>
<div class="t" style="left:551.2px;top:681px;height:13px;line-height:13px;font-size:9.3px;color:#999;-webkit-text-stroke:0.2px currentColor;">|</div>
<svg style="left:560px;top:686.1px" width="1" height="1" viewBox="0 0 1 1"><path d="M0.00 -3.18Q0.75 -0.75 3.18 0.00Q0.75 0.75 0.00 3.18Q-0.75 0.75 -3.18 0.00Q-0.75 -0.75 0.00 -3.18ZM3.54 1.74Q3.96 3.18 5.40 3.60Q3.96 4.02 3.54 5.46Q3.12 4.02 1.68 3.60Q3.12 3.18 3.54 1.74Z" fill="#999" stroke="#999" stroke-width="0.30" stroke-linejoin="round"/></svg>
<div class="t" style="left:568.9px;top:681px;height:13px;line-height:13px;font-size:9.3px;color:#999;letter-spacing:0.180px;-webkit-text-stroke:0.2px currentColor;">SnowConvert AI</div>
<div class="hl" style="top:693px"></div>
<div class="ln" style="top:693px;">43</div>
<div class="cl" style="top:693px"><span class="p">!!!</span><span class="v">RESOLVE EWI</span><span class="p">!!! </span><span class="c">/*** SSC-EWI-0035 - CHECK STATEMENT NOT SUPPORTED ***/</span><span class="p">!!!</span></div>
<div class="ln" style="top:710px;">44</div>
<div class="cl" style="top:710px"><span class="v">ALTER </span><span class="k">TABLE </span><span class="v">dbo.Employees</span></div>
<svg style="left:517.1px;top:733.1px" width="1" height="1" viewBox="0 0 1 1"><path d="M0.00 -3.18Q0.75 -0.75 3.18 0.00Q0.75 0.75 0.00 3.18Q-0.75 0.75 -3.18 0.00Q-0.75 -0.75 0.00 -3.18ZM3.54 1.74Q3.96 3.18 5.40 3.60Q3.96 4.02 3.54 5.46Q3.12 4.02 1.68 3.60Q3.12 3.18 3.54 1.74Z" fill="#999" stroke="#999" stroke-width="0.30" stroke-linejoin="round"/></svg>
<div class="t" style="left:525.7px;top:728px;height:13px;line-height:13px;font-size:9.3px;color:#999;letter-spacing:0.194px;-webkit-text-stroke:0.2px currentColor;">SnowConvert AI</div>
<div class="hl" style="top:740px"></div>
<div class="ln" style="top:740px;">45</div>
<div class="cl" style="top:740px"><span class="p">!!!</span><span class="v">RESOLVE EWI</span><span class="p">!!! </span><span class="c">/*** SSC-EWI-0035 - CHECK STATEMENT NOT SUPPORTED ***/</span><span class="p">!!!</span></div>
<div class="ln" style="top:757px;">46</div>
<div class="cl" style="top:757px"><span class="k">WITH </span><span class="v">CHECK ADD </span><span class="k">CONSTRAINT </span><span class="v">CHK_Employees_HireDate</span></div>
<div class="ln" style="top:774px;">47</div>
<div class="cl" style="top:774px"><span class="v">CHECK </span><span class="b1">(</span><span class="v">HireDate </span><span class="k">IS NULL OR </span><span class="v">HireDate </span><span class="p">&gt;= </span><span class="v">BirthDate</span><span class="b1">)</span><span class="p">;</span></div>
<div class="ln" style="top:791px;">48</div>
<div class="ln" style="top:808px;">49</div>
<div class="cl" style="top:808px"><span class="c">-- Add self-referencing foreign key with CHECK</span></div>
<div class="t" style="left:514.2px;top:826px;height:13px;line-height:13px;font-size:9.3px;color:#999;letter-spacing:0.057px;-webkit-text-stroke:0.2px currentColor;">Execute</div>
<div class="ln" style="top:838px;">50</div>
<div class="cl" style="top:838px"><span class="v">ALTER </span><span class="k">TABLE </span><span class="v">dbo.Employees</span></div>
<svg style="left:517.1px;top:861.1px" width="1" height="1" viewBox="0 0 1 1"><path d="M0.00 -3.18Q0.75 -0.75 3.18 0.00Q0.75 0.75 0.00 3.18Q-0.75 0.75 -3.18 0.00Q-0.75 -0.75 0.00 -3.18ZM3.54 1.74Q3.96 3.18 5.40 3.60Q3.96 4.02 3.54 5.46Q3.12 4.02 1.68 3.60Q3.12 3.18 3.54 1.74Z" fill="#999" stroke="#999" stroke-width="0.30" stroke-linejoin="round"/></svg>
<div class="t" style="left:525.7px;top:856px;height:13px;line-height:13px;font-size:9.3px;color:#999;letter-spacing:0.194px;-webkit-text-stroke:0.2px currentColor;">SnowConvert AI</div>
<div class="hl" style="top:868px"></div>
<div class="ln" style="top:868px;">51</div>
<div class="cl" style="top:868px"><span class="p">!!!</span><span class="v">RESOLVE EWI</span><span class="p">!!! </span><span class="c">/*** SSC-EWI-0035 - CHECK STATEMENT NOT SUPPORTED ***/</span><span class="p">!!!</span></div>
<div class="ln" style="top:885px;">52</div>
<div class="cl" style="top:885px"><span class="k">WITH </span><span class="v">CHECK ADD </span><span class="k">CONSTRAINT </span><span class="v">FK_Employees_Manager</span></div>
<div class="ln" style="top:902px;">53</div>
<div class="cl" style="top:902px"><span class="k">FOREIGN </span><span class="v">KEY </span><span class="b1">(</span><span class="v">ManagerID</span><span class="b1">)</span><span class="p"> </span><span class="k">REFERENCES </span><span class="v">dbo.Employees </span><span class="b1">(</span><span class="v">EmployeeID</span><span class="b1">)</span><span class="p">;</span></div>
<div class="ln" style="top:919px;">54</div>
<div class="ln" style="top:936px;">55</div>
<div class="cl" style="top:936px"><span class="c">-- Disable a constraint</span></div>
<div class="t" style="left:514.2px;top:954px;height:13px;line-height:13px;font-size:9.3px;color:#999;letter-spacing:0.057px;-webkit-text-stroke:0.2px currentColor;">Execute</div>
<div class="t" style="left:551.2px;top:954px;height:13px;line-height:13px;font-size:9.3px;color:#999;-webkit-text-stroke:0.2px currentColor;">|</div>
<svg style="left:560px;top:959.1px" width="1" height="1" viewBox="0 0 1 1"><path d="M0.00 -3.18Q0.75 -0.75 3.18 0.00Q0.75 0.75 0.00 3.18Q-0.75 0.75 -3.18 0.00Q-0.75 -0.75 0.00 -3.18ZM3.54 1.74Q3.96 3.18 5.40 3.60Q3.96 4.02 3.54 5.46Q3.12 4.02 1.68 3.60Q3.12 3.18 3.54 1.74Z" fill="#999" stroke="#999" stroke-width="0.30" stroke-linejoin="round"/></svg>
<div class="t" style="left:568.9px;top:954px;height:13px;line-height:13px;font-size:9.3px;color:#999;letter-spacing:0.180px;-webkit-text-stroke:0.2px currentColor;">SnowConvert AI</div>
<div class="hl" style="top:966px"></div>
<div class="ln" style="top:966px;">56</div>
<div class="cl" style="top:966px"><span class="p">!!!</span><span class="v">RESOLVE EWI</span><span class="p">!!! </span><span class="c">/*** SSC-EWI-0035 - CHECK STATEMENT NOT SUPPORTED ***/</span><span class="p">!!!</span></div>
<div class="ln" style="top:983px;">57</div>
<div class="cl" style="top:983px"><span class="v">ALTER </span><span class="k">TABLE </span><span class="v">dbo.Employees</span></div>
<div class="ln" style="top:1000px;">58</div>
<div class="cl" style="top:1000px"><span class="v">NOCHECK </span><span class="k">CONSTRAINT </span><span class="v">CHK_Employees_Salary</span><span class="p">;</span></div>
<div class="ln" style="top:1017px;">59</div>
</div></div>
<div class="abs" style="left:0;top:1033px;width:1352px;height:22px;background:#181818;border-top:1px solid #2b2b2b"></div>
<div class="abs" style="left:0;top:1034px;width:34px;height:21px;background:#1c78d5"></div>
<svg style="left:0;top:1031px" width="40" height="22" viewBox="0 0 40 22" fill="none" stroke="#fff" stroke-width="1.050"><path d="M13 10.700L16.600 14.300L13 18.200"/><path d="M20.800 7.200L17.600 11.100L20.800 14.600"/></svg>
<svg style="left:0;top:0" width="1" height="1" viewBox="0 0 1 1" fill="none" stroke="#ccc" stroke-width="1" stroke-linejoin="round" stroke-linecap="round"><path d="M54.900 1038.100C51.500 1038.100 49 1039.500 47.600 1041L44.200 1044.600L48.600 1049L52.200 1045.600C53.700 1044.200 54.900 1041.500 54.900 1038.100Z"/><path d="M47.600 1041L43.300 1041.400L43.400 1044.400L44.200 1044.600"/><path d="M52.200 1045.600L51.700 1049.800L48.800 1049.700L48.600 1049"/><circle cx="50.300" cy="1042.800" r="1.100" fill="#ccc" stroke="none"/><path d="M43.100 1047.300V1049.800H45.700"/><path d="M62.300 1040.400L64.900 1038.500L68.600 1038.300L68 1042.400L65.800 1044.100Z"/><path d="M59 1043.600L63.300 1046.300C63.200 1048.500 61 1049.700 59.200 1048.900C57.500 1048 57 1045.600 59 1043.600Z"/><path d="M61 1044.200L62.100 1042.800M63 1045.600L64.300 1044.400M58.200 1048.800L57 1050"/></svg>
<div class="t" style="left:73px;top:1033px;height:22px;line-height:22px;font-size:12px;color:#ccc;letter-spacing:0.401px;-webkit-text-stroke:0.35px currentColor;">Launchpad</div>
<svg style="left:153px;top:1036px" width="12" height="16" viewBox="0 0 12 16" fill="none" stroke="#ccc" stroke-width="1"><circle cx="5.700" cy="3.600" r="1.600"/><path d="M3.300 7.800a2.400 2.400 0 0 1 4.800 0v3.200h-1.100v3h-2.600v-3h-1.100z" stroke-linejoin="round"/></svg>
<div class="t" style="left:166.3px;top:1033px;height:22px;line-height:22px;font-size:12px;color:#ccc;letter-spacing:-0.015px;-webkit-text-stroke:0.35px currentColor;">: SYSADMIN</div>
<svg style="left:252.500px;top:1036px" width="12" height="16" viewBox="0 0 12 16" fill="none" stroke="#ccc" stroke-width="1"><ellipse cx="6" cy="4" rx="4.200" ry="1.800"/><path d="M1.800 4v8.500c0 1 1.900 1.800 4.200 1.800s4.200-.8 4.200-1.800v-8.500"/></svg>
<div class="t" style="left:265.8px;top:1033px;height:22px;line-height:22px;font-size:12px;color:#ccc;letter-spacing:0.958px;-webkit-text-stroke:0.35px currentColor;">: ----</div>
<svg style="left:310px;top:1037px" width="14" height="14" viewBox="0 0 14 14" fill="none" stroke="#ccc" stroke-width="1"><path d="M1.300 2.500h11.600M4.600 2.500v9.500M4.600 5.700h8.300M4.600 8.800h8.300M4.600 12h8.300"/></svg>
<div class="t" style="left:325.3px;top:1033px;height:22px;line-height:22px;font-size:12px;color:#ccc;letter-spacing:0.991px;-webkit-text-stroke:0.35px currentColor;">: ----</div>
<svg style="left:0;top:0" width="1" height="1" viewBox="0 0 1 1" fill="none" stroke="#ccc" stroke-width="1" stroke-linejoin="round"><path d="M377.800 1039.100H381.900L380 1042.800H382.200L375.500 1049.600L376.700 1045.500H374Z"/></svg>
<div class="t" style="left:384.5px;top:1033px;height:22px;line-height:22px;font-size:12px;color:#ccc;letter-spacing:-0.022px;-webkit-text-stroke:0.35px currentColor;">: QA_MOBILIZE</div>
<svg style="left:487.100px;top:1037.200px" width="14" height="14" viewBox="0 0 14 14" fill="none" stroke="#ccc" stroke-width="1"><circle cx="7" cy="7" r="5.600"/><path d="M4.800 4.800l4.400 4.400M9.200 4.800l-4.400 4.400"/></svg>
<div class="t" style="left:504.8px;top:1033px;height:22px;line-height:22px;font-size:12px;color:#ccc;letter-spacing:-0.074px;-webkit-text-stroke:0.35px currentColor;">0</div>
<svg style="left:515.4px;top:1036.5px" width="14" height="14" viewBox="0 0 16 16" fill="none" stroke="#ccc" stroke-width="1.100" stroke-linejoin="round"><path d="M8 2L14.400 13.800H1.600z"/><path d="M8 6.200v3.800" stroke-width="1.300"/><path d="M8 11.200v1.100" stroke-width="1.300"/></svg>
<div class="t" style="left:533.6px;top:1033px;height:22px;line-height:22px;font-size:12px;color:#ccc;letter-spacing:-0.074px;-webkit-text-stroke:0.35px currentColor;">0</div>
<div class="t" style="left:1338.5px;top:1033px;height:22px;line-height:22px;font-size:12px;color:#ccc;letter-spacing:0.326px;-webkit-text-stroke:0.35px currentColor;">Ln</div>
<div id="wb"></div>
</div></body></html>
